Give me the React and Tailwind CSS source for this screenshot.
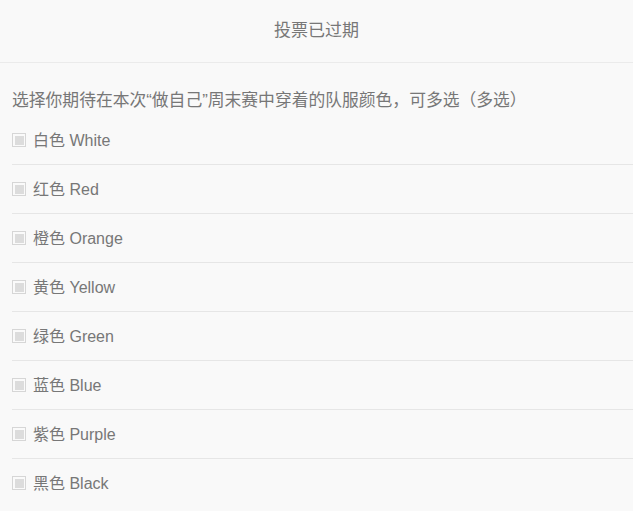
import React from 'react';

const colors = [
  '白色 White',
  '红色 Red',
  '橙色 Orange',
  '黄色 Yellow',
  '绿色 Green',
  '蓝色 Blue',
  '紫色 Purple',
  '黑色 Black',
];

const font = { fontFamily: '"Liberation Sans", "Noto Sans CJK SC", sans-serif' };

const Box = () => (
  <span className="flex h-[14px] w-[14px] shrink-0 items-center justify-center border border-[#d6d6d6] bg-[#fafafa]">
    <span className="h-[9px] w-[9px] bg-[#dcdcdc]" />
  </span>
);

export default function App() {
  return (
    <div className="min-h-screen bg-[#f9f9f9] text-[#777777]" style={font}>
      <header className="flex h-[63px] items-center justify-center border-b border-[#ebebeb] text-[17px]">
        投票已过期
      </header>

      <div className="pl-3 pt-[26px] pb-[3px] text-[16.8px] leading-6 whitespace-nowrap">
        选择你期待在本次“做自己”周末赛中穿着的队服颜色，可多选（多选）
      </div>

      <ul className="ml-3">
        {colors.map((c, i) => (
          <li
            key={c}
            className={`flex h-[48px] items-center gap-[7px] text-[16px] ${
              i < colors.length - 1 ? 'border-b border-[#e6e6e6] box-content' : ''
            }`}
          >
            <Box />
            <span className="pt-px">{c}</span>
          </li>
        ))}
      </ul>
    </div>
  );
}
